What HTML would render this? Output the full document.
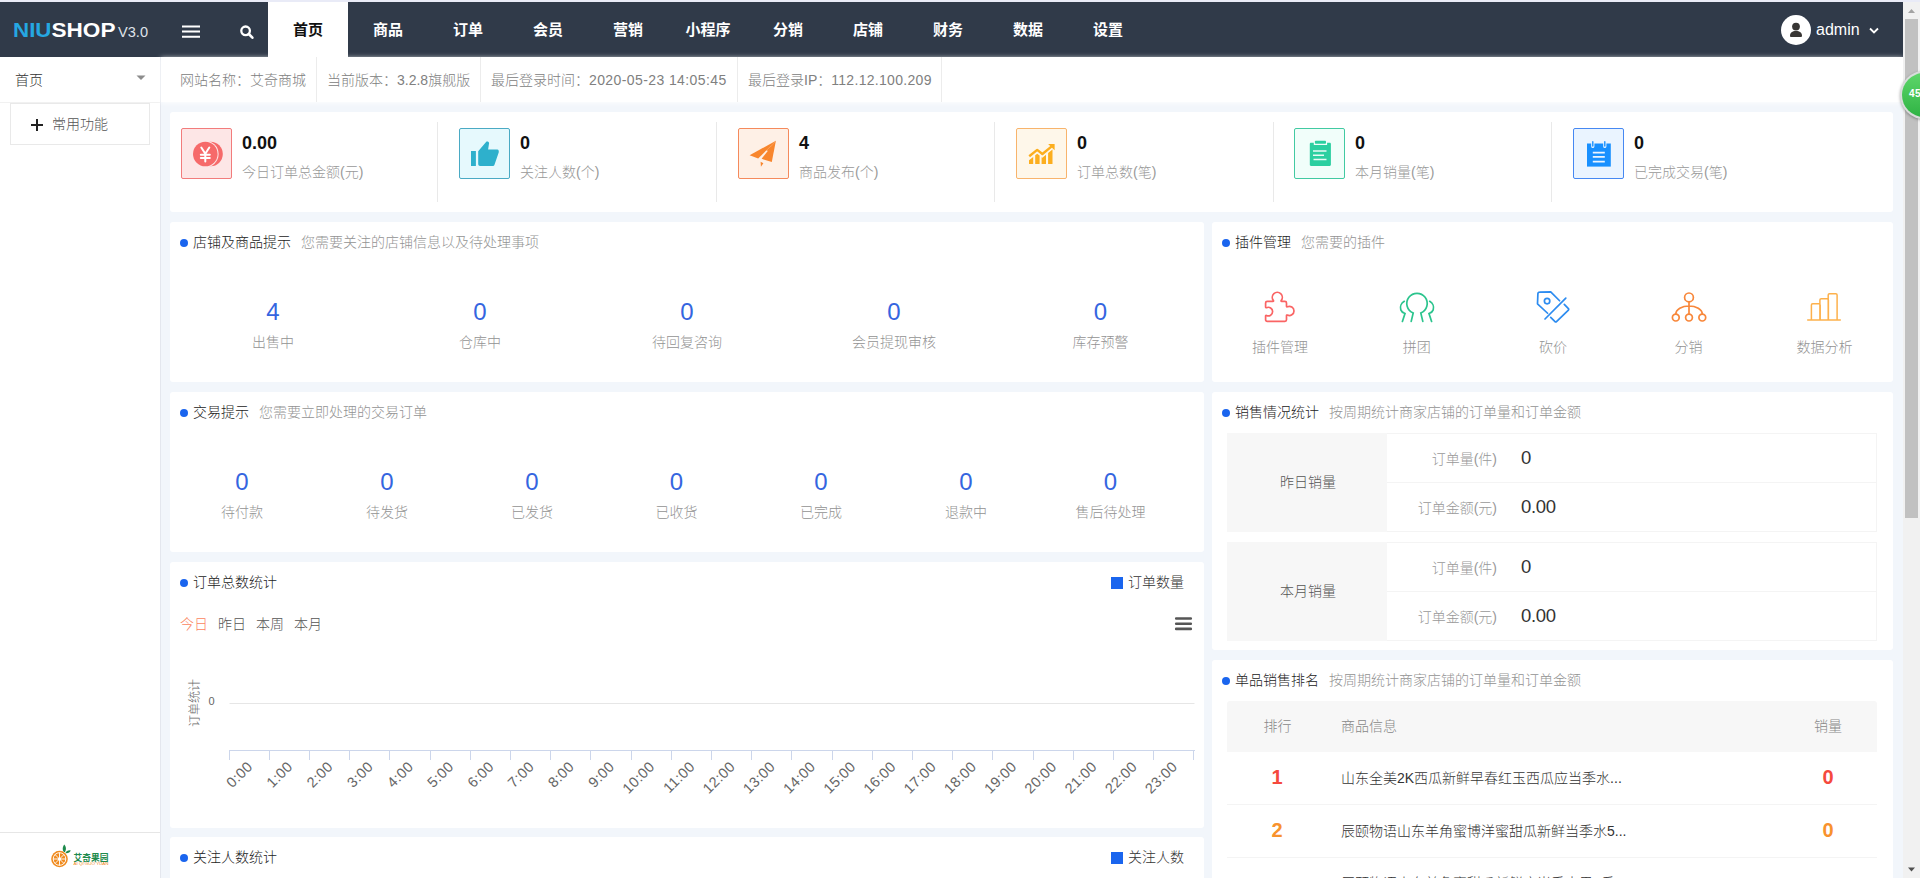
<!DOCTYPE html>
<html lang="zh-CN">
<head>
<meta charset="utf-8">
<title>NIUSHOP</title>
<style>
*{box-sizing:border-box;margin:0;padding:0}
html,body{width:1920px;height:878px;overflow:hidden}
body{position:relative;background:#f2f6fb;font-family:"Liberation Sans","Noto Sans CJK SC",sans-serif;font-size:14px;color:#333;line-height:1;font-weight:300}
.abs{position:absolute}
.t{position:absolute;white-space:nowrap;line-height:20px;height:20px}
/* top strip */
#strip{left:0;top:0;width:1920px;height:2px;background:#e9ebf7}
/* header */
#hdr{left:0;top:2px;width:1903px;height:55px;background:#303a49}
#hdr .nav{position:absolute;top:0;height:55px;width:80px;text-align:center;line-height:56px;color:#fff;font-weight:bold;font-size:15px}
#hdr .nav.on{background:#fff;color:#111}
/* sidebar */
#side{left:0;top:57px;width:161px;height:821px;background:#fff;border-right:1px solid #e4e7ee}
/* info bar */
#info{left:161px;top:57px;width:1742px;height:45px;background:#fff;box-shadow:0 1px 5px rgba(255,255,255,.9)}
#info .it{position:absolute;top:1px;height:45px;line-height:45px;color:#808080;font-size:14px;white-space:nowrap}
#info .sp{position:absolute;top:0;width:1px;height:45px;background:#ececec}
.card{position:absolute;background:#fff;border-radius:3px}
.ttl{position:absolute;left:23px;top:10px;height:20px;line-height:20px;font-size:14px;color:#222;white-space:nowrap}
.ttl:before{content:"";position:absolute;left:-13px;top:6.500px;width:8px;height:8px;border-radius:50%;background:#1a65ee}
.ttl span{color:#939393;margin-left:10px}
.num{position:absolute;width:120px;margin-left:-60px;text-align:center;font-size:24px;line-height:26px;color:#3565e0}
.lab{position:absolute;width:140px;margin-left:-70px;text-align:center;font-size:14px;line-height:20px;color:#939393}
/* stats */
.ib{position:absolute;top:16px;width:51px;height:51px;border:1px solid;border-radius:2px}
.sv{position:absolute;top:20px;font-size:18px;font-weight:bold;line-height:22px;color:#111}
.sl{position:absolute;top:50px;font-size:14px;line-height:20px;color:#999;white-space:nowrap}
.vs{position:absolute;top:10px;width:1px;height:80px;background:#e9e9e9}
.sval{font-size:18.500px;color:#333;line-height:24px;height:24px;letter-spacing:-0.300px}
.rk{font-size:20px;font-weight:bold;line-height:24px}
/* scrollbar */
#sb{left:1903px;top:2px;width:17px;height:876px;background:#f1f1f1}
#sbt{left:1905px;top:19px;width:13px;height:499px;background:#c1c1c1}
</style>
</head>
<body>
<div id="strip" class="abs"></div>

<!-- HEADER -->
<div id="hdr" class="abs">
  <svg class="abs" style="left:10px;top:16px" width="145" height="24" viewBox="0 0 145 24">
    <text x="3" y="18.5" font-family="Liberation Sans, sans-serif" font-weight="bold" font-size="20" fill="#25a7e1" textLength="38.500" lengthAdjust="spacingAndGlyphs">NIU</text>
    <text x="41.500" y="18.5" font-family="Liberation Sans, sans-serif" font-weight="bold" font-size="20" fill="#fff" textLength="64" lengthAdjust="spacingAndGlyphs">SHOP</text>
    <text x="108" y="19" font-family="Liberation Sans, sans-serif" font-size="15" fill="#dfe3ea" textLength="30" lengthAdjust="spacingAndGlyphs">V3.0</text>
  </svg>
  <svg class="abs" style="left:182px;top:22.500px" width="18" height="14" viewBox="0 0 18 14"><path d="M0 1.5h18M0 6.6h18M0 11.7h18" stroke="#fff" stroke-width="2" fill="none"/></svg>
  <svg class="abs" style="left:239px;top:22px" width="16" height="16" viewBox="0 0 16 16"><circle cx="6.6" cy="6.8" r="4.3" stroke="#fff" stroke-width="2.3" fill="none"/><path d="M9.8 10l3.6 3.7" stroke="#fff" stroke-width="2.6" stroke-linecap="round"/></svg>
  <div class="nav on" style="left:268px">首页</div>
  <div class="nav" style="left:348px">商品</div>
  <div class="nav" style="left:428px">订单</div>
  <div class="nav" style="left:508px">会员</div>
  <div class="nav" style="left:588px">营销</div>
  <div class="nav" style="left:668px">小程序</div>
  <div class="nav" style="left:748px">分销</div>
  <div class="nav" style="left:828px">店铺</div>
  <div class="nav" style="left:908px">财务</div>
  <div class="nav" style="left:988px">数据</div>
  <div class="nav" style="left:1068px">设置</div>
  <div class="abs" style="left:1781px;top:13px;width:30px;height:30px;border-radius:50%;background:#fff"></div>
  <svg class="abs" style="left:1787px;top:19px" width="18" height="18" viewBox="0 0 18 18"><circle cx="9" cy="5.600" r="3.900" fill="#383634"/><path d="M3 15c0-3.300 2.200-4.900 6-4.900s6 1.600 6 4.900c0 .500-.400.900-.900.900H3.900c-.500 0-.900-.400-.900-.900z" fill="#383634"/></svg>
  <div class="t" style="left:1816px;top:18px;color:#fff;font-size:16px">admin</div>
  <svg class="abs" style="left:1869.300px;top:24.800px" width="10" height="8" viewBox="0 0 10 8"><path d="M1 1.5l4 4 4-4" stroke="#fff" stroke-width="1.800" fill="none"/></svg>
</div>

<!-- SIDEBAR -->
<div id="side" class="abs">
  <div class="t" style="left:15px;top:13px;color:#333">首页</div>
  <svg class="abs" style="left:136px;top:18px" width="10" height="6" viewBox="0 0 10 6"><path d="M0.5 0.5h9L5 5z" fill="#8c8c8c"/></svg>
  <div class="abs" style="left:0;top:45px;width:160px;height:1px;background:#f1f1f1"></div>
  <div class="abs" style="left:10px;top:46px;width:140px;height:42px;border:1px solid #e9e9e9"></div>
  <svg class="abs" style="left:31px;top:62px" width="12" height="12" viewBox="0 0 12 12"><path d="M6 0v12M0 6h12" stroke="#222" stroke-width="2"/></svg>
  <div class="t" style="left:52px;top:57px;color:#555">常用功能</div>
  <div class="abs" style="left:0;top:775px;width:160px;height:1px;background:#e6e6e6"></div>
  <svg class="abs" style="left:48px;top:784px" width="66" height="30" viewBox="0 0 66 30">
    <circle cx="11.5" cy="18" r="8.3" fill="#f08a1d"/>
    <circle cx="11.5" cy="18" r="6.3" fill="none" stroke="#fff" stroke-width="0.9"/>
    <path d="M11.5 11.5v13M5 18h13M7 13.5l9 9M16 13.5l-9 9" stroke="#fff" stroke-width="0.9"/>
    <circle cx="11.5" cy="18" r="1.6" fill="#fff"/>
    <path d="M16 11c-2-2-1.500-5.500 0.400-7.500 1.700 2 2.200 5 0.600 7.500z" fill="#1e8a4c"/>
    <path d="M17.500 12c0.600-2 3-3 5.200-2.600-0.800 2-3 3.200-5.200 2.600z" fill="#1e8a4c"/>
    <text x="25.500" y="19.500" font-family="Liberation Sans, Noto Sans CJK SC, sans-serif" font-weight="bold" font-size="9" fill="#1e8a4c" textLength="35" lengthAdjust="spacingAndGlyphs">艾奇果园</text>
    <text x="25.500" y="24.400" font-family="Liberation Sans, sans-serif" font-size="3.600" fill="#f08a1d" textLength="35" lengthAdjust="spacingAndGlyphs">AI QI GUO YUAN</text>
  </svg>
</div>

<!-- INFO BAR -->
<div id="info" class="abs">
  <div class="it" style="left:19px">网站名称：艾奇商城</div>
  <div class="sp" style="left:155px"></div>
  <div class="it" style="left:166px">当前版本：3.2.8旗舰版</div>
  <div class="sp" style="left:319px"></div>
  <div class="it" style="left:330px">最后登录时间：<span style="letter-spacing:0.400px">2020-05-23 14:05:45</span></div>
  <div class="sp" style="left:576px"></div>
  <div class="it" style="left:587px">最后登录IP：<span style="letter-spacing:0.300px">112.12.100.209</span></div>
  <div class="sp" style="left:780px"></div>
</div>

<!-- STATS -->
<div class="card" id="stats" style="left:170px;top:112px;width:1723px;height:100px">
  <div class="ib" style="left:11px;border-color:#f27c7c;background:#fde6e6"><svg class="abs" style="left:-1px;top:-1px" width="51" height="51" viewBox="0 0 51 51"><circle cx="29.6" cy="26" r="12.2" fill="#f66a6a"/><circle cx="24.3" cy="26" r="13.3" fill="#fde6e6"/><circle cx="24.3" cy="26" r="12.3" fill="#f66a6a"/><path d="M20.300 19.500l4 6.300 4-6.300M24.300 25.500v8M19.800 26.800h9M19.800 30h9" stroke="#fff" stroke-width="2" fill="none" stroke-linecap="round" stroke-linejoin="round"/></svg></div>
  <div class="sv" style="left:72px">0.00</div><div class="sl" style="left:72px">今日订单总金额(元)</div>
  <div class="ib" style="left:289px;border-color:#4aaac4;background:#e6f9fd"><svg class="abs" style="left:-1px;top:-1px" width="51" height="51" viewBox="0 0 51 51"><path d="M12 23h4.900v15H12z" fill="#2eb0cc"/><path d="M19.200 23.200l8.300-9.600c1.300-.4 2.500.3 2.600 1.500l-1 6.300h9.300c1.200.2 1.700 1.500 1.300 3.200l-4.300 12.300c-.4.800-.9 1-1.700 1H21c-1 0-1.800-.8-1.800-2z" fill="#2eb0cc"/></svg></div>
  <div class="sv" style="left:350px">0</div><div class="sl" style="left:350px">关注人数(个)</div>
  <div class="ib" style="left:568px;border-color:#f58a5c;background:#fef0e6"><svg class="abs" style="left:-1px;top:-1px" width="51" height="51" viewBox="0 0 51 51"><path d="M37.900 12.800L11.600 27.300l8.600 3.200z" fill="#f8862d"/><path d="M37.900 12.800L23.600 30.800l10.200 3.100z" fill="#f8862d"/><path d="M22.600 33.800l2.800 1.400-2.500 3.500z" fill="#f8862d"/><path d="M37.900 12.800L28.300 22.600l2.400.300z" fill="#f8862d"/></svg></div>
  <div class="sv" style="left:629px">4</div><div class="sl" style="left:629px">商品发布(个)</div>
  <div class="ib" style="left:846px;border-color:#f8b46c;background:#fef7ea"><svg class="abs" style="left:-1px;top:-1px" width="51" height="51" viewBox="0 0 51 51"><path d="M13 32.200L17.200 28.900V36H13zM19.200 27.300l2-1.600 2.400 1.900V36h-4.400zM25.600 29.200l.800.600 3.600-3V36h-4.400zM32.100 25l4.400-3.600V36h-4.400z" fill="#fcae1e"/><path d="M13.200 28.200l8-6.300 5.200 4.100 9-7.400" stroke="#fcae1e" stroke-width="2.400" fill="none" stroke-linejoin="round"/><path d="M32.100 16h6.500v6.300z" fill="#fcae1e"/></svg></div>
  <div class="sv" style="left:907px">0</div><div class="sl" style="left:907px">订单总数(笔)</div>
  <div class="ib" style="left:1124px;border-color:#42caa2;background:#f1fefa"><svg class="abs" style="left:-1px;top:-1px" width="51" height="51" viewBox="0 0 51 51"><path d="M17 14.700h2.800v2.200h13.300v-2.200h2.600c.7 0 1.200.5 1.200 1.200v20.800c0 .7-.5 1.200-1.200 1.200H17c-.7 0-1.200-.5-1.200-1.200V15.900c0-.7.500-1.200 1.200-1.200z" fill="#2ccfa0"/><rect x="20.900" y="12.700" width="11.100" height="3.100" rx="0.800" fill="#2ccfa0"/><path d="M19 22.900h13.500M19 27.300h11M19.500 31.500h13" stroke="#e8fbf5" stroke-width="1.500"/></svg></div>
  <div class="sv" style="left:1185px">0</div><div class="sl" style="left:1185px">本月销量(笔)</div>
  <div class="ib" style="left:1403px;border-color:#4688f2;background:#eaf4ff"><svg class="abs" style="left:-1px;top:-1px" width="51" height="51" viewBox="0 0 51 51"><path d="M14 15.500h23.800v23.100H14z" fill="#1890ff"/><path d="M19.800 13.500v5M31.800 13.500v5" stroke="#eaf4ff" stroke-width="3.200" stroke-linecap="round"/><path d="M19.800 13.800v4.200M31.800 13.800v4.200" stroke="#1890ff" stroke-width="1.400" stroke-linecap="round"/><path d="M19.800 24.600h12M19.800 28.900h12M19.800 33.600h12" stroke="#eaf4ff" stroke-width="1.700"/></svg></div>
  <div class="sv" style="left:1464px">0</div><div class="sl" style="left:1464px">已完成交易(笔)</div>
  <div class="vs" style="left:267px"></div>
  <div class="vs" style="left:546px"></div>
  <div class="vs" style="left:824px"></div>
  <div class="vs" style="left:1103px"></div>
  <div class="vs" style="left:1381px"></div>
</div>

<div class="card" style="left:170px;top:222px;width:1034px;height:160px">
  <div class="ttl">店铺及商品提示<span>您需要关注的店铺信息以及待处理事项</span></div>
  <div class="num" style="left:103px;top:77px">4</div><div class="lab" style="left:103px;top:110px">出售中</div>
  <div class="num" style="left:310px;top:77px">0</div><div class="lab" style="left:310px;top:110px">仓库中</div>
  <div class="num" style="left:517px;top:77px">0</div><div class="lab" style="left:517px;top:110px">待回复咨询</div>
  <div class="num" style="left:724px;top:77px">0</div><div class="lab" style="left:724px;top:110px">会员提现审核</div>
  <div class="num" style="left:930.5px;top:77px">0</div><div class="lab" style="left:930.5px;top:110px">库存预警</div>
</div>

<div class="card" style="left:170px;top:392px;width:1034px;height:160px">
  <div class="ttl">交易提示<span>您需要立即处理的交易订单</span></div>
  <div class="num" style="left:72px;top:77px">0</div><div class="lab" style="left:72px;top:110px">待付款</div>
  <div class="num" style="left:217px;top:77px">0</div><div class="lab" style="left:217px;top:110px">待发货</div>
  <div class="num" style="left:362px;top:77px">0</div><div class="lab" style="left:362px;top:110px">已发货</div>
  <div class="num" style="left:506.5px;top:77px">0</div><div class="lab" style="left:506.5px;top:110px">已收货</div>
  <div class="num" style="left:651px;top:77px">0</div><div class="lab" style="left:651px;top:110px">已完成</div>
  <div class="num" style="left:796px;top:77px">0</div><div class="lab" style="left:796px;top:110px">退款中</div>
  <div class="num" style="left:940.5px;top:77px">0</div><div class="lab" style="left:940.5px;top:110px">售后待处理</div>
</div>

<div class="card" style="left:1212px;top:222px;width:681px;height:160px">
  <div class="ttl">插件管理<span>您需要的插件</span></div>
  <svg class="abs" style="left:50.0px;top:67px" width="36" height="36" viewBox="0 0 36 36" fill="none" stroke="#fa6464" stroke-width="1.700"><path d="M5.200 12.400h5.800c.500 0 .700-.400.400-.900a5 5 0 1 1 7.800 0c-.300.500-.100.900.400.900h3.300c.900 0 1.600.700 1.600 1.600v3.300c0 .500.400.700.900.500a4.600 4.600 0 1 1 0 8.300c-.500-.200-.900 0-.900.500V30.800c0 .900-.700 1.600-1.600 1.600H5.200c-.900 0-1.600-.700-1.600-1.600v-3.700c0-.500.400-.800.900-.600a4.300 4.300 0 1 0 0-7.800c-.500.200-.900-.100-.900-.600v-4.100c0-.900.700-1.600 1.600-1.600z"/></svg>
  <div class="lab" style="left:68.0px;top:115px">插件管理</div>
  <svg class="abs" style="left:186.7px;top:67px" width="36" height="36" viewBox="0 0 36 36" fill="none" stroke="#2bc48d" stroke-width="1.700"><path d="M12.200 32.400l2-8.400a10.200 10.200 0 1 1 7.600 0l2 8.400M5.300 12.300c-3 1.800-4.600 5.400-3.500 8.600.600 1.800 2.200 3 4.200 3.600l-2.600 7.900M30.700 12.300c3 1.800 4.600 5.400 3.500 8.600-.600 1.800-2.200 3-4.200 3.600l2.600 7.900" stroke-linecap="round"/></svg>
  <div class="lab" style="left:204.7px;top:115px">拼团</div>
  <svg class="abs" style="left:323.0px;top:67px" width="36" height="36" viewBox="0 0 36 36" fill="none" stroke="#2d8cf0" stroke-width="1.700"><path d="M24.600 11.750L15.700 2.900 4.500 3.200c-.900 0-1.600.700-1.600 1.600L2.500 14.900l10.100 9.350M30.800 9.100L10 30M29.300 15.400l4.100 4.200c.400.400.400 1.100 0 1.500L21.500 32.600c-.400.400-1.100.400-1.500 0l-4.300-4.200" stroke-linecap="round" stroke-linejoin="round"/><circle cx="12.100" cy="12.100" r="2.700"/></svg>
  <div class="lab" style="left:341.0px;top:115px">砍价</div>
  <svg class="abs" style="left:458.9px;top:67px" width="36" height="36" viewBox="0 0 36 36" fill="none" stroke="#f8873a" stroke-width="1.700"><circle cx="18" cy="8.400" r="4.400"/><circle cx="4.800" cy="28.600" r="3.400"/><circle cx="18" cy="28.600" r="3.400"/><circle cx="31.300" cy="28.600" r="3.400"/><path d="M18 12.800v12.400M4.800 25.200C4.800 20.500 11 17 18 17s13.300 3.500 13.300 8.200"/></svg>
  <div class="lab" style="left:476.4px;top:115px">分销</div>
  <svg class="abs" style="left:594.4px;top:67px" width="36" height="36" viewBox="0 0 36 36" fill="none" stroke="#fdb14c" stroke-width="1.500"><path d="M1.700 31.100h32.600M5.400 31.100V16c0-.700.600-1.300 1.300-1.300h6.200c.700 0 1.300.600 1.300 1.300v15.100M13.900 31.100V11c0-.700.600-1.300 1.300-1.300h5.900c.700 0 1.300.600 1.300 1.300v20.100M22.200 31.100V6c0-.700.600-1.300 1.300-1.300h6.300c.700 0 1.300.600 1.300 1.300v25.100" stroke-linecap="round"/></svg>
  <div class="lab" style="left:612.4px;top:115px">数据分析</div>
</div>

<div class="card" style="left:1212px;top:392px;width:681px;height:258px">
  <div class="ttl">销售情况统计<span>按周期统计商家店铺的订单量和订单金额</span></div>
  <div class="abs" style="left:15px;top:41px;width:650px;height:99px;border:1px solid #f4f4f4"></div>
  <div class="abs" style="left:15px;top:41px;width:160px;height:99px;background:#f7f7f7;text-align:center;line-height:98px;color:#555;padding-left:2px">昨日销量</div>
  <div class="abs" style="left:175px;top:90px;width:490px;height:1px;background:#f4f4f4"></div>
  <div class="t" style="left:135px;width:150px;text-align:right;top:57px;color:#999">订单量(件)</div><div class="t sval" style="left:309px;top:54px">0</div>
  <div class="t" style="left:135px;width:150px;text-align:right;top:106px;color:#999">订单金额(元)</div><div class="t sval" style="left:309px;top:103px">0.00</div>
  <div class="abs" style="left:15px;top:150px;width:650px;height:99px;border:1px solid #f4f4f4"></div>
  <div class="abs" style="left:15px;top:150px;width:160px;height:99px;background:#f7f7f7;text-align:center;line-height:98px;color:#555;padding-left:2px">本月销量</div>
  <div class="abs" style="left:175px;top:199px;width:490px;height:1px;background:#f4f4f4"></div>
  <div class="t" style="left:135px;width:150px;text-align:right;top:166px;color:#999">订单量(件)</div><div class="t sval" style="left:309px;top:163px">0</div>
  <div class="t" style="left:135px;width:150px;text-align:right;top:215px;color:#999">订单金额(元)</div><div class="t sval" style="left:309px;top:212px">0.00</div>
</div>

<div class="card" style="left:1212px;top:660px;width:681px;height:240px">
  <div class="ttl">单品销售排名<span>按周期统计商家店铺的订单量和订单金额</span></div>
  <div class="abs" style="left:15px;top:41px;width:650px;height:51px;background:#f7f7f7;border-radius:3px 3px 0 0"></div>
  <div class="lab" style="left:65.500px;top:56px;color:#888">排行</div><div class="t" style="left:129px;top:56px;color:#888">商品信息</div><div class="lab" style="left:616px;top:56px;color:#888">销量</div>
  <div class="abs" style="left:15px;top:144px;width:650px;height:1px;background:#f4f4f4"></div>
  <div class="lab rk" style="left:65px;top:105px;color:#f5493d">1</div><div class="t" style="left:129px;top:108px;color:#333">山东全美2K西瓜新鲜早春红玉西瓜应当季水...</div><div class="lab rk" style="left:616px;top:105px;color:#f5493d">0</div>
  <div class="abs" style="left:15px;top:197px;width:650px;height:1px;background:#f4f4f4"></div>
  <div class="lab rk" style="left:65px;top:158px;color:#f8922d">2</div><div class="t" style="left:129px;top:161px;color:#333">辰颐物语山东羊角蜜博洋蜜甜瓜新鲜当季水5...</div><div class="lab rk" style="left:616px;top:158px;color:#f8922d">0</div>
  <div class="abs" style="left:15px;top:250px;width:650px;height:1px;background:#f2f2f2"></div>
  <div class="lab" style="left:65px;top:214px;color:#666">3</div><div class="t" style="left:129px;top:213px;color:#333">辰颐物语山东羊角蜜甜瓜新鲜应当季水果5斤...</div><div class="lab" style="left:616px;top:214px;color:#666">0</div>
</div>

<!-- CHART -->
<div class="card" style="left:170px;top:562px;width:1034px;height:266px">
  <div class="ttl">订单总数统计</div>
  <div class="abs" style="left:941px;top:15px;width:12px;height:12px;background:#1a65ee"></div><div class="t" style="left:958px;top:10px;color:#333">订单数量</div>
  <div class="t" style="left:10px;top:52px;color:#fb8560">今日</div><div class="t" style="left:48px;top:52px;color:#555">昨日</div><div class="t" style="left:86px;top:52px;color:#555">本周</div><div class="t" style="left:124px;top:52px;color:#555">本月</div>
  <svg class="abs" style="left:0;top:40px" width="1034" height="226" viewBox="0 0 1034 226" font-family="Liberation Sans, Noto Sans CJK SC, sans-serif">
    <path d="M1006.200 16.500h14.600M1006.200 21.700h14.600M1006.200 26.900h14.600" stroke="#555" stroke-width="2.600" stroke-linecap="round"/>
    <text x="24.700" y="101" transform="rotate(-90 24.700 101)" text-anchor="middle" dy="4" font-size="12" fill="#666">订单统计</text>
    <text x="44.500" y="103" text-anchor="end" font-size="11" fill="#666">0</text>
    <path d="M59.500 101.500H1024.500" stroke="#e6e6e6" stroke-width="1"/>
    <path d="M59 148.500H1025" stroke="#ccd6eb" stroke-width="1"/>
    <path d="M59.5 148v10M99.5 148v10M139.5 148v10M179.5 148v10M219.5 148v10M260.5 148v10M300.5 148v10M340.5 148v10M380.5 148v10M420.5 148v10M461.5 148v10M501.5 148v10M541.5 148v10M581.5 148v10M621.5 148v10M662.5 148v10M702.5 148v10M742.5 148v10M782.5 148v10M822.5 148v10M863.5 148v10M903.5 148v10M943.5 148v10M983.5 148v10M1023.5 148v10" stroke="#ccd6eb" stroke-width="1"/>
    <text x="83.4" y="165.500" transform="rotate(-45 83.4 165.500)" text-anchor="end" font-size="14.500" letter-spacing="0.400" fill="#666">0:00</text>
    <text x="123.6" y="165.500" transform="rotate(-45 123.6 165.500)" text-anchor="end" font-size="14.500" letter-spacing="0.400" fill="#666">1:00</text>
    <text x="163.8" y="165.500" transform="rotate(-45 163.8 165.500)" text-anchor="end" font-size="14.500" letter-spacing="0.400" fill="#666">2:00</text>
    <text x="204.0" y="165.500" transform="rotate(-45 204.0 165.500)" text-anchor="end" font-size="14.500" letter-spacing="0.400" fill="#666">3:00</text>
    <text x="244.2" y="165.500" transform="rotate(-45 244.2 165.500)" text-anchor="end" font-size="14.500" letter-spacing="0.400" fill="#666">4:00</text>
    <text x="284.4" y="165.500" transform="rotate(-45 284.4 165.500)" text-anchor="end" font-size="14.500" letter-spacing="0.400" fill="#666">5:00</text>
    <text x="324.7" y="165.500" transform="rotate(-45 324.7 165.500)" text-anchor="end" font-size="14.500" letter-spacing="0.400" fill="#666">6:00</text>
    <text x="364.9" y="165.500" transform="rotate(-45 364.9 165.500)" text-anchor="end" font-size="14.500" letter-spacing="0.400" fill="#666">7:00</text>
    <text x="405.1" y="165.500" transform="rotate(-45 405.1 165.500)" text-anchor="end" font-size="14.500" letter-spacing="0.400" fill="#666">8:00</text>
    <text x="445.3" y="165.500" transform="rotate(-45 445.3 165.500)" text-anchor="end" font-size="14.500" letter-spacing="0.400" fill="#666">9:00</text>
    <text x="485.5" y="165.500" transform="rotate(-45 485.5 165.500)" text-anchor="end" font-size="14.500" letter-spacing="0.400" fill="#666">10:00</text>
    <text x="525.7" y="165.500" transform="rotate(-45 525.7 165.500)" text-anchor="end" font-size="14.500" letter-spacing="0.400" fill="#666">11:00</text>
    <text x="565.9" y="165.500" transform="rotate(-45 565.9 165.500)" text-anchor="end" font-size="14.500" letter-spacing="0.400" fill="#666">12:00</text>
    <text x="606.1" y="165.500" transform="rotate(-45 606.1 165.500)" text-anchor="end" font-size="14.500" letter-spacing="0.400" fill="#666">13:00</text>
    <text x="646.3" y="165.500" transform="rotate(-45 646.3 165.500)" text-anchor="end" font-size="14.500" letter-spacing="0.400" fill="#666">14:00</text>
    <text x="686.5" y="165.500" transform="rotate(-45 686.5 165.500)" text-anchor="end" font-size="14.500" letter-spacing="0.400" fill="#666">15:00</text>
    <text x="726.7" y="165.500" transform="rotate(-45 726.7 165.500)" text-anchor="end" font-size="14.500" letter-spacing="0.400" fill="#666">16:00</text>
    <text x="766.9" y="165.500" transform="rotate(-45 766.9 165.500)" text-anchor="end" font-size="14.500" letter-spacing="0.400" fill="#666">17:00</text>
    <text x="807.2" y="165.500" transform="rotate(-45 807.2 165.500)" text-anchor="end" font-size="14.500" letter-spacing="0.400" fill="#666">18:00</text>
    <text x="847.4" y="165.500" transform="rotate(-45 847.4 165.500)" text-anchor="end" font-size="14.500" letter-spacing="0.400" fill="#666">19:00</text>
    <text x="887.6" y="165.500" transform="rotate(-45 887.6 165.500)" text-anchor="end" font-size="14.500" letter-spacing="0.400" fill="#666">20:00</text>
    <text x="927.8" y="165.500" transform="rotate(-45 927.8 165.500)" text-anchor="end" font-size="14.500" letter-spacing="0.400" fill="#666">21:00</text>
    <text x="968.0" y="165.500" transform="rotate(-45 968.0 165.500)" text-anchor="end" font-size="14.500" letter-spacing="0.400" fill="#666">22:00</text>
    <text x="1008.2" y="165.500" transform="rotate(-45 1008.2 165.500)" text-anchor="end" font-size="14.500" letter-spacing="0.400" fill="#666">23:00</text>
  </svg>
</div>

<div class="card" style="left:170px;top:837px;width:1034px;height:60px">
  <div class="ttl" style="top:10px">关注人数统计</div>
  <div class="abs" style="left:941px;top:15px;width:12px;height:12px;background:#1a65ee"></div><div class="t" style="left:958px;top:10px;color:#333">关注人数</div>
</div>

<!-- SCROLLBAR -->
<div id="sb" class="abs"></div>
<div id="sbt" class="abs"></div>
<svg class="abs" style="left:1903px;top:2px" width="17" height="17" viewBox="0 0 17 17"><path d="M5 11l3.500-4 3.500 4z" fill="#a3a3a3"/></svg>
<svg class="abs" style="left:1903px;top:861px" width="17" height="17" viewBox="0 0 17 17"><path d="M5 6.500l3.500 4 3.500-4z" fill="#505050"/></svg>
<div class="abs" style="left:1900px;top:71px;width:48px;height:48px;border-radius:50%;background:#d9dcdb;box-shadow:0 1px 3px rgba(0,0,0,.35)"></div>
<div class="abs" style="left:1902px;top:73px;width:44px;height:44px;border-radius:50%;background:linear-gradient(#5ed66a,#2fb344);color:#fff;font-weight:bold;font-size:10px;line-height:42px;padding-left:7px;letter-spacing:0.500px">45</div>
</body>
</html>
